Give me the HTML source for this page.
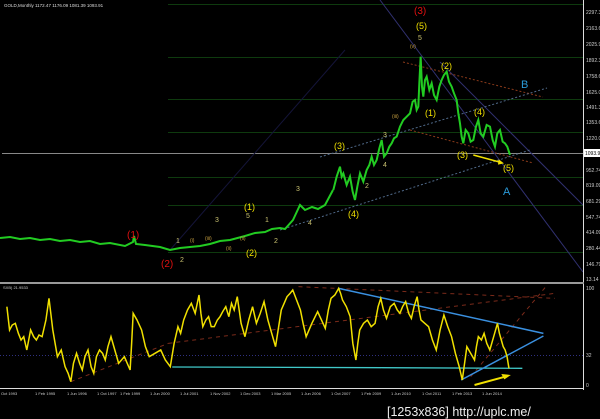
<!DOCTYPE html>
<html><head><meta charset="utf-8"><style>
html,body{margin:0;padding:0;background:#000;width:600px;height:419px;overflow:hidden}
svg{display:block}
text{font-family:"Liberation Sans",sans-serif}
.ax{fill:#ccc;font-size:5px}
.y{fill:#f0e000;font-size:9px}
.yl{fill:#c8c070;font-size:7px}
.r{fill:#e01010;font-size:10px}
.sm{fill:#c8a040;font-size:5px}
</style></head><body>
<svg width="600" height="419" viewBox="0 0 600 419" xmlns="http://www.w3.org/2000/svg">
<rect width="600" height="419" fill="#000"/>
<text x="4" y="7" fill="#ddd" font-size="4.5">GOLD,Monthly  1172.47 1176.09 1081.39 1093.91</text>
<g stroke="#0e3a0e" stroke-width="1">
<line x1="168" y1="4.5" x2="583" y2="4.5"/>
<line x1="168" y1="57.5" x2="583" y2="57.5"/>
<line x1="168" y1="99.5" x2="583" y2="99.5"/>
<line x1="168" y1="132.5" x2="583" y2="132.5"/>
<line x1="168" y1="177.5" x2="583" y2="177.5"/>
<line x1="168" y1="205.5" x2="583" y2="205.5"/>
<line x1="168" y1="252.5" x2="583" y2="252.5"/>
</g>
<line x1="2" y1="153.5" x2="583" y2="153.5" stroke="#888" stroke-width="1"/>
<g stroke="#303070" stroke-width="1" fill="none">
<line x1="380" y1="0" x2="583" y2="272"/>
<line x1="440" y1="62" x2="583" y2="205"/>
</g>
<line x1="170" y1="250" x2="345" y2="50" stroke="#141438" stroke-width="1"/>
<g stroke="#8a3a1a" stroke-width="1" stroke-dasharray="2,2" fill="none">
<line x1="403" y1="62" x2="543" y2="97"/>
<line x1="410" y1="130" x2="533" y2="163"/>
</g>
<g stroke="#506a8a" stroke-width="1" stroke-dasharray="2,2" fill="none">
<line x1="320" y1="157" x2="547" y2="88"/>
<line x1="280" y1="230" x2="530" y2="150"/>
</g>
<polyline fill="none" stroke="#22cc22" stroke-width="2" points="0,238 10,237 20,239 30,238 40,240 50,239 60,241 70,240 80,242 90,241 100,244 110,243 125,246 133,242 134,236 136,244 145,245 160,247 170,250 180,248 190,247 200,246 210,244 220,241 230,240 245,236 255,233 265,232 272,229 280,228 285,229 293,220 300,205 305,210 312,207 318,209 325,205 333,190"/>
<g transform="translate(300,0) scale(0.3333)">
<polyline fill="none" stroke="#22cc22" stroke-width="2" vector-effect="non-scaling-stroke" points="100,570 110,530 120,500 125,530 130,520 140,555 150,530 158,575 165,600 172,560 180,520 190,545 200,510 208,495 215,470 222,495 230,480 238,445 245,420 252,470 260,460 268,440 275,430 282,415 290,410 300,380 310,360 320,350 330,340 338,305 345,300 350,330 355,320 358,250 362,170 366,260 370,290 375,240 380,230 388,270 395,250 402,285 410,300 418,260 425,240 432,225 440,215 447,245 455,260 462,280 470,300 475,340 480,370 485,410 490,430 497,390 505,400 512,425 520,420 528,380 535,360 542,400 550,410 560,375 570,380 578,420 585,440 592,400 600,390 608,425 615,430 622,440 630,465"/>
<line x1="520" y1="465" x2="605" y2="488" stroke="#f0e000" stroke-width="1.5" vector-effect="non-scaling-stroke"/>
<polygon points="612,490 596,478 594,494" fill="#f0e000"/>
</g>
<text class="r" x="414" y="14">(3)</text>
<text class="y" x="416" y="29">(5)</text>
<text class="yl" x="418" y="40">5</text>
<text class="y" x="441" y="69">(2)</text>
<text class="y" x="425" y="116">(1)</text>
<text class="y" x="474" y="115">(4)</text>
<text class="y" x="457" y="158">(3)</text>
<text class="y" x="503" y="171">(5)</text>
<text x="521" y="88" fill="#2a9ad8" font-size="11">B</text>
<text x="503" y="195" fill="#2a9ad8" font-size="11">A</text>
<text class="y" x="334" y="149">(3)</text>
<text class="y" x="348" y="217">(4)</text>
<text class="y" x="244" y="210">(1)</text>
<text class="y" x="246" y="256">(2)</text>
<text class="r" x="127" y="238">(1)</text>
<text class="r" x="161" y="267">(2)</text>
<text class="yl" x="296" y="191">3</text>
<text class="yl" x="308" y="225">4</text>
<text class="yl" x="383" y="137">3</text>
<text class="yl" x="383" y="167">4</text>
<text class="yl" x="365" y="188">2</text>
<text class="yl" x="274" y="243">2</text>
<text class="yl" x="265" y="222">1</text>
<text class="yl" x="215" y="222">3</text>
<text class="yl" x="176" y="243">1</text>
<text class="yl" x="180" y="262">2</text>
<text class="yl" x="246" y="218">5</text>
<text class="sm" x="392" y="118">(iii)</text>
<text class="sm" x="410" y="48">(v)</text>
<text class="sm" x="190" y="242">(i)</text>
<text class="sm" x="205" y="240">(iii)</text>
<text class="sm" x="240" y="240">(ii)</text>
<text class="sm" x="226" y="250">(ii)</text>
<line x1="583.5" y1="0" x2="583.5" y2="390" stroke="#ddd" stroke-width="1"/>
<g class="ax">
<text x="586" y="14">2297.3</text><text x="586" y="30">2163.6</text><text x="586" y="46">2025.9</text><text x="586" y="62">1892.3</text><text x="586" y="78">1758.6</text><text x="586" y="94">1625.0</text><text x="586" y="109">1491.3</text><text x="586" y="124">1353.6</text><text x="586" y="140">1220.0</text><text x="586" y="172">952.74</text><text x="586" y="187">819.09</text><text x="586" y="203">681.29</text><text x="586" y="219">547.74</text><text x="586" y="234">414.09</text><text x="586" y="250">280.44</text><text x="586" y="266">146.79</text><text x="586" y="281">13.14</text>
</g>
<rect x="584" y="149" width="16" height="8" fill="#fff"/>
<text x="585" y="155" fill="#000" font-size="5">1093.91</text>
<rect x="0" y="282" width="584" height="2" fill="#999"/>
<text x="3" y="289" fill="#ccc" font-size="4">SXB) 21.9533</text>
<line x1="0" y1="355.5" x2="583" y2="355.5" stroke="#303080" stroke-dasharray="1,2"/>
<text class="ax" x="586" y="290">100</text><text class="ax" x="586" y="357">32</text><text class="ax" x="586" y="387">0</text>
<g transform="translate(0,270) scale(0.38268,0.33333)" fill="none">
<line x1="185" y1="335" x2="440" y2="220" stroke="#7a2a1a" stroke-dasharray="4,4" vector-effect="non-scaling-stroke"/>
<line x1="440" y1="220" x2="1450" y2="70" stroke="#7a2a1a" stroke-dasharray="4,4" vector-effect="non-scaling-stroke"/>
<line x1="780" y1="50" x2="1450" y2="85" stroke="#7a2a1a" stroke-dasharray="4,4" vector-effect="non-scaling-stroke"/>
<line x1="1230" y1="320" x2="1430" y2="45" stroke="#7a2a1a" stroke-dasharray="4,4" vector-effect="non-scaling-stroke"/>
<polyline stroke="#40c8c8" stroke-width="1.3" vector-effect="non-scaling-stroke" points="450,291 1000,293 1365,295"/>
<polyline stroke="#3a90e0" stroke-width="1.5" vector-effect="non-scaling-stroke" points="885,55 1420,190"/>
<polyline stroke="#3a90e0" stroke-width="1.5" vector-effect="non-scaling-stroke" points="1205,330 1420,198"/>
<polyline stroke="#f0e000" stroke-width="1.5" vector-effect="non-scaling-stroke" points="18,110 25,180 32,165 40,160 48,190 55,210 62,200 70,240 80,180 88,200 95,210 102,195 110,200 120,150 128,85 138,180 150,260 160,240 170,290 178,310 185,335 192,280 200,250 208,280 215,300 222,260 230,240 238,290 245,310 252,260 260,240 268,250 275,270 282,230 290,200 300,240 310,280 325,260 340,300 344,220 348,130 358,150 370,180 380,230 390,260 405,250 420,240 432,270 445,290 455,220 465,170 472,190 480,150 490,120 500,100 510,130 520,75 525,130 530,170 538,150 545,140 552,170 560,170 568,150 575,140 582,125 590,110 598,140 605,100 612,120 620,80 630,160 640,200 650,150 660,110 670,160 680,130 690,95 700,150 710,190 715,210 720,230 735,120 750,80 758,70 765,60 775,90 785,120 792,160 800,200 815,160 830,125 840,150 850,175 858,120 865,85 875,75 885,55 890,70 895,90 905,110 915,140 922,220 930,270 935,220 940,180 950,160 960,150 970,170 980,160 988,110 995,85 1002,120 1010,145 1020,110 1030,100 1038,120 1045,130 1052,110 1060,95 1068,130 1075,145 1082,110 1090,80 1095,120 1100,150 1110,160 1120,170 1130,210 1140,240 1150,180 1160,135 1170,170 1180,200 1190,250 1200,290 1208,330 1214,280 1220,230 1230,250 1240,270 1245,230 1250,200 1258,210 1265,190 1272,220 1280,240 1290,200 1300,160 1305,190 1310,210 1315,230 1320,240 1325,260 1330,295"/>
<line x1="1240" y1="345" x2="1320" y2="320" stroke="#f0e000" stroke-width="2" vector-effect="non-scaling-stroke"/>
<polygon points="1335,315 1310,312 1318,328" fill="#f0e000"/>
</g>
<line x1="0" y1="388.5" x2="584" y2="388.5" stroke="#ddd"/>
<g fill="#ccc" font-size="4">
<text x="1" y="395">Oct 1993</text><text x="35" y="395">1 Feb 1995</text><text x="67" y="395">1 Jun 1996</text><text x="97" y="395">1 Oct 1997</text><text x="120" y="395">1 Feb 1999</text><text x="150" y="395">1 Jun 2000</text><text x="180" y="395">1 Jul 2001</text><text x="210" y="395">1 Nov 2002</text><text x="240" y="395">1 Dec 2003</text><text x="271" y="395">1 Mar 2005</text><text x="301" y="395">1 Jun 2006</text><text x="331" y="395">1 Oct 2007</text><text x="361" y="395">1 Feb 2009</text><text x="391" y="395">1 Jun 2010</text><text x="422" y="395">1 Oct 2011</text><text x="452" y="395">1 Feb 2013</text><text x="482" y="395">1 Jun 2014</text>
</g>
<text x="387" y="416" fill="#eee" font-size="12.5" font-family="Liberation Sans Narrow,Liberation Sans,sans-serif">[1253x836] http://uplc.me/</text>
</svg>
</body></html>
